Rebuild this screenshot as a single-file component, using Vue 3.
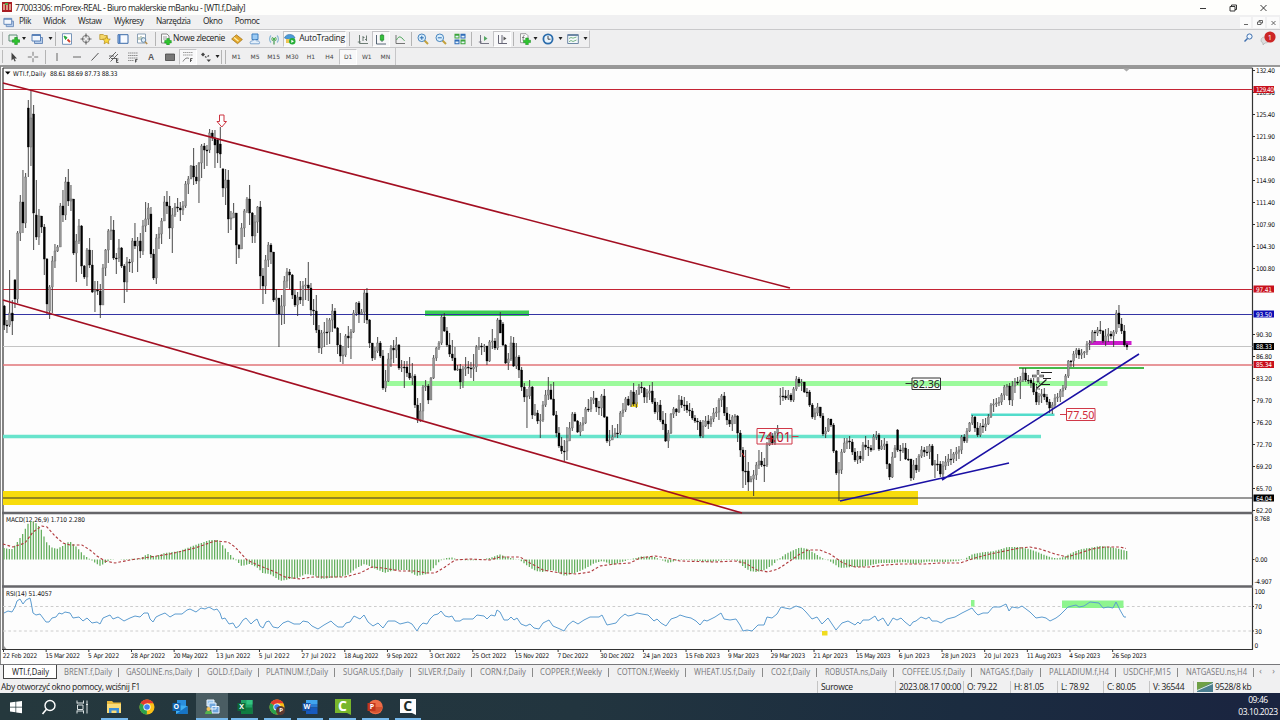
<script setup>
import { ref, computed } from 'vue'

const menu = ['Plik', 'Widok', 'Wstaw', 'Wykresy', 'Narzędzia', 'Okno', 'Pomoc']

// toolbar cells: icon id + cell width
const toolbar = [
    ['newchart', 17], ['arr', 4], ['profiles', 22], ['arr', 5], ['sep', 5], ['market', 18], ['cross', 19], ['fav', 19], ['panel', 18], ['tester', 19],
    ['sep', 9], ['order', 11], ['text', 56, 'Nowe zlecenie'], ['hat', 19], ['vps', 18], ['signal', 19], ['auto', 63, 'AutoTrading'], ['grip', 7],
    ['bars', 19], ['candles', 18, '', true], ['linec', 19], ['sep', 4], ['zin', 19], ['zout', 18], ['tile', 19], ['sep', 5], ['scroll', 19], ['shift', 18, '', true],
    ['sep', 5], ['ind', 17], ['arr', 5], ['clock', 20], ['arr', 5], ['tmpl', 20], ['arr', 5]
]
const drawTools = [
    ['cursor', 17], ['plus', 21], ['sep', 4], ['vline', 20], ['hline', 19], ['trend', 18], ['chan', 19], ['fibo', 19], ['atext', 18],
    ['label', 19], ['fan', 18, '', true], ['arrows', 18], ['arr', 5], ['sep', 3], ['grip', 4]
]
const frames = ['M1', 'M5', 'M15', 'M30', 'H1', 'H4', 'D1', 'W1', 'MN']
const frame = ref('D1')

const tabs = [
    ['WTI.f,Daily', 54, 37], ['BRENT.f,Daily', 62, 48], ['GASOLINE.ns,Daily', 80, 66], ['GOLD.f,Daily', 60, 45], ['PLATINUM.f,Daily', 76, 62],
    ['SUGAR.US.f,Daily', 76, 60], ['SILVER.f,Daily', 61, 47], ['CORN.f,Daily', 61, 46], ['COPPER.f,Weekly', 76, 62], ['COTTON.f,Weekly', 77, 62],
    ['WHEAT.US.f,Daily', 77, 61], ['CO2.f,Daily', 54, 39], ['ROBUSTA.ns,Daily', 77, 62], ['COFFEE.US.f,Daily', 78, 63], ['NATGAS.f,Daily', 69, 53],
    ['PALLADIUM.f,H4', 75, 60], ['USDCHF,M15', 62, 48], ['NATGASEU.ns,H4', 76, 61]
]
const tab = ref('WTI.f,Daily')

const status = [['Surowce', 78], ['2023.08.17 00:00', 68], ['O: 79.22', 47], ['H: 81.05', 47], ['L: 78.92', 46], ['C: 80.05', 46], ['V: 36544', 44]]

const apps = [
    ['win', ''], ['search', ''], ['tasks', ''], ['folder', 'open'], ['chrome', ''], ['outlook', ''], ['mt4', 'open active'], ['excel', 'open'],
    ['chromep', 'open'], ['word', 'open'], ['camt', 'open'], ['ppt', 'open'], ['camw', 'open']
]

const dates = [
    '22 Feb 2022', '15 Mar 2022', '5 Apr 2022', '28 Apr 2022', '20 May 2022', '13 Jun 2022', '5 Jul 2022', '27 Jul 2022', '18 Aug 2022',
    '9 Sep 2022', '3 Oct 2022', '25 Oct 2022', '15 Nov 2022', '7 Dec 2022', '30 Dec 2022', '24 Jan 2023', '15 Feb 2023', '9 Mar 2023',
    '29 Mar 2023', '21 Apr 2023', '15 May 2023', '6 Jun 2023', '28 Jun 2023', '20 Jul 2023', '11 Aug 2023', '4 Sep 2023', '26 Sep 2023'
]
const prices = [
    ['132.40', 70.5], ['128.90', 92.5], ['125.40', 114.5], ['121.90', 136.5], ['118.40', 158.5], ['114.90', 180.5], ['111.40', 202.5], ['107.90', 224.5],
    ['104.30', 246.5], ['100.80', 268.5], ['90.30', 334.5], ['86.80', 356.5], ['83.20', 378.5], ['79.70', 400.5], ['76.20', 422.5], ['72.70', 444.5],
    ['69.20', 466.5], ['65.70', 488.5], ['62.20', 510.5]
]
const tags = [
    ['129.40', 89.5, '#c8101c'], ['97.41', 289, '#c8101c'], ['93.50', 314, '#0c0cb4'], ['88.33', 346.5, '#000'], ['85.34', 364.5, '#c8101c'], ['64.04', 498, '#000']
]

// one bar: close high low [open], open falls back to the previous close
const quotes = `325 305 330 306,325 320 333,313 270 327,321 300 335,299 279 308 280,233 231 303,202 195 241,223 170 233,177 173 228,147 100 177 108,
118 90 166,213 105 250 114,237 180 240 215,216 209 245,227 216 233,259 224 275,304 258 314,287 285 319 311,261 256 313,251 244 268,
247 245 252,206 203 247,215 190 222,182 177 220,201 169 206,199 185 211,253 199 255,241 234 282,226 219 244,266 225 274,
277 265 279,250 248 286,265 238 268,292 250 293,290 281 312,291 281 295,305 284 318,268 264 305,250 249 276,231 229 263,
230 216 240,258 220 260,258 253 274,248 239 262,266 247 268,282 264 303,262 257 292,262 259 272,241 238 273,246 223 249,
241 237 272,251 233 258,226 220 255,219 202 232,208 203 225,254 207 258 214,278 249 280,238 234 284,234 227 249,221 218 244,
202 196 216,206 191 214,228 196 239,215 208 253,207 203 217,208 198 212,210 202 221,206 201 215,184 181 208,179 176 194,
166 165 178,177 148 185,181 165 184,163 162 203,146 144 178,150 143 169,150 145 166,133 129 153,138 130 141,145 130 168,
153 138 163 140,154 127 168 144,188 168 197 169,180 169 205,219 170 233,218 211 230,213 203 217,245 213 264,249 244 258,228 223 249,
211 209 237,199 197 213,213 185 225,236 212 243,222 215 243,207 206 233,276 201 289,286 268 304,260 255 294,245 242 267,
252 243 264,300 252 302,298 289 314,314 307 347,306 295 325,281 276 324,272 268 288,275 269 289,295 274 299,305 290 307,
297 292 316,300 281 304,286 281 306,285 278 300,288 262 301,310 283 316,311 299 325,330 295 333,348 325 353,333 330 354,
332 322 347,332 318 345,320 318 344,311 304 332,328 308 329,345 327 354,356 333 362,355 346 364,336 334 357,338 326 348,
332 329 359,313 310 333,303 302 316,314 301 323,312 309 315,293 290 323,320 288 324,343 319 348,358 343 361,351 347 360,
343 337 353,356 341 358,388 350 390,381 370 392,359 353 382,348 345 367,350 340 363,345 337 358,368 344 370,367 360 372,
367 361 388,373 361 377,378 357 380,376 363 385,405 374 408,420 398 423,411 403 422,387 385 420,386 380 391,400 384 404,
378 377 390,358 355 379,348 347 361,343 341 350,317 315 345,331 313 332,345 327 347,354 333 357,358 340 361,370 347 371,
369 365 371,382 364 389,369 366 388,367 357 376,368 361 374,369 362 378,367 354 381,347 345 372,346 337 350,347 343 355,
346 344 352,361 347 365,342 340 362,341 329 349,348 338 350,320 318 350,333 312 333,345 322 346 324,363 344 364,359 353 370,
343 336 361,366 337 367,357 343 369,370 355 378,387 367 391,397 383 402,396 389 428,387 380 399,415 386 419,413 404 416,
421 410 424,420 414 438,405 401 422,395 390 407,390 377 400,399 384 400,415 382 416,433 411 437,446 427 448,451 437 454,
451 440 461,441 427 460,428 422 441,414 412 431,421 412 422,432 420 433,425 422 436,423 417 431,409 407 424,409 399 412,
400 397 412,398 391 404,407 398 412,408 401 415,396 394 416,417 389 418,441 416 443,440 430 446,437 425 440,433 428 437,
433 424 438,413 411 435,410 403 417,399 397 412,405 396 406,392 390 407,404 383 406,394 390 408,387 384 395,388 382 393,
397 387 403,393 389 403,391 385 400,402 382 404,412 398 414,405 402 420,420 400 422,424 411 430,441 413 442,433 430 448,
414 413 434,409 407 418,412 408 416,400 395 413,405 396 408,405 397 411,410 401 413,411 403 416,418 408 420,421 415 423,
422 418 430,436 420 438,426 420 438,421 416 427,424 415 429,419 416 427,413 408 422,412 407 417,400 398 420,396 394 407,
413 392 416,420 407 425,424 414 427,417 415 431,416 414 424,433 415 442,450 430 457,471 447 488,471 450 485,482 462 491,
479 476 482,475 470 496,465 462 480,461 450 469,465 452 467,465 458 482,445 442 467,436 434 446,443 433 445,433 431 445,
429 425 436,396 388 405 397,396 387 401,398 390 400,395 390 400,400 393 402,389 387 402,379 376 391,383 377 387,382 379 391,
392 382 393,392 388 397,405 390 407,417 403 419,413 408 420,407 403 416,416 407 418,434 413 436,431 427 438,419 418 432,
425 420 427,451 423 453,473 450 475,470 462 501,452 449 474,443 438 453,441 438 449,442 436 449,452 439 455,460 448 462,
456 451 464,459 451 463,445 442 461,447 436 450,448 440 456,450 445 452,437 434 450,435 431 440,449 433 451,446 440 450,
444 438 450,464 441 469,477 463 480,457 452 478,448 445 458,450 429 452 430,451 445 461,448 443 453,459 443 460,459 449 461,
478 461 481,465 460 480,470 458 473,456 454 472,450 446 458,452 447 457,452 446 456,446 444 459,465 444 466,464 460 478,
464 454 471,474 461 477,466 461 477,462 456 470,459 454 466,459 449 465,454 452 463,452 447 461,450 446 459,437 435 454,
441 434 443,431 428 443,423 422 432,417 415 425,428 416 432,435 422 437,426 423 437,427 419 433,424 418 431,417 414 425,
405 403 418,404 399 412,403 398 407,402 397 406,395 393 405,387 385 400,386 384 396,400 383 405,386 381 406,382 378 393,
382 377 385,380 376 399,373 368 382,380 368 382,380 375 384,383 378 388,392 378 395,402 389 405,396 393 405,394 389 403,
397 388 400,402 394 405,408 399 413,405 402 414,398 394 408,397 393 402,391 389 402,388 385 397,376 374 390,361 360 378,
361 360 367,354 351 367,350 348 358,355 348 359,353 349 359,352 351 358,344 341 355,343 340 350,332 330 343,333 330 342,
330 327 336,331 321 334,341 330 343,336 329 346,334 328 342,336 331 339,332 330 347,313 310 334,324 305 328,331 318 334,
345 325 347,347 343 350`

const step = 8 / 3
const candles = computed(() => {
    let prev = 0
    return quotes.split(',').map((row, i) => {
        const [c, h, l, o = prev] = row.trim().split(' ').map(Number)
        prev = c
        return { x: 4.3 + i * step, h, l, y: Math.min(o, c), size: Math.max(1, Math.abs(o - c)), up: c < o }
    })
})

const toPoints = text => text.trim().split(/\s+/).map(p => p.split(',').map(Number))

const macd = toPoints(`4,548 12,549.5 17,543 23,534 28,524 31,521 35,522 41,528 46,541 51,547 57,549 63,546 67,542.5 71,542 77,547 84,555 90,559 95,562.5 100,566 104,564 110,560
125,559 140,558.6 148,554 155,556.5 165,553 180,551 190,547 200,543.5 210,540 218,540 222,544 230,554 237,561 242,566 250,564 257,567 263,573 270,574 281,581 290,579 298,578
306,574 313,575 322,579 330,578 340,577 348,575 357,568 365,564 374,568 385,573 395,570 407,570 417,576 427,574 433,569 440,561 446,558 452,557.5 460,560 475,560.4 490,558
500,554.5 507,557 520,560 528,566 536,571 543,572 550,570 556,571 565,576 575,573 585,569 595,563 603,561 613,565 622,562 632,559 642,556.5 655,557 662,560 669,563 678,560
690,560 710,562 725,560 737,560 743,566 750,571 757,572 765,570 773,565 778,560 786,554 794,550 800,547.5 808,549 816,554 822,558 828,560 833,563 840,568 853,567 862,567
872,565 880,563 893,563 905,562 915,564 928,561.5 945,562 958,561 965,559 973,554 985,552 995,551 1008,547 1020,547 1030,549 1040,553 1050,557 1057,558.5 1064,557 1072,553
1080,549.5 1092,547.5 1100,546 1110,547 1120,549 1130,552`)

const histogram = computed(() => candles.value.map(({ x }) => {
    const k = Math.max(1, macd.findIndex(p => p[0] > x))
    const [a, b] = [macd[k - 1], macd[k]]
    const y = a[1] + (b[1] - a[1]) * (x - a[0]) / (b[0] - a[0])
    return { x, y }
}))

const signalLine = `3,544 13,547 25,543 33,532 42,526 47,527 55,536 63,543 70,545 82,545 90,550 97,556 105,561 115,563 130,560 150,557 170,554 195,548 215,541 228,542 235,547
247,560 260,566 275,572 285,577 300,579 313,577 345,577 360,573 372,567 383,568 400,571 415,571 427,573 435,573 445,567 455,560 470,559 490,560 500,557 520,557 530,563
543,570 560,573 577,574 590,572 600,566 615,564 630,563 640,558 655,556 667,558 680,561 715,562 735,561 745,563 757,570 768,572 778,569 790,561 800,554 808,550 820,550
830,554 843,563 855,567 870,567 885,565 900,564 925,564 940,563 960,563 975,558 990,554 1005,551 1020,548 1030,547 1040,549 1055,554 1067,557 1080,553 1092,549 1105,547 1120,547 1126,548.5`

const rsiLine = `4,613 8,611 12,612 15,607 17,601 20,599 23,604 26,600 30,598 31,602 33,613 36,615 40,614 43,618 46,622 49,622 52,618 56,617 59,613 62,614 65,612 70,613 73,618
79,617 83,621 87,618 92,623 97,622 100,624 103,618 110,615 113,619 118,617 124,621 130,618 135,616 140,617 144,613 148,613 150,619 153,622 156,617 160,615 165,613 170,617
175,614 182,614 187,610 190,609 196,612 201,608 205,609 209,607 214,610 217,609 220,613 222,619 225,618 229,624 233,623 236,628 239,626 243,620 246,618 251,624 254,621
257,619 260,626 263,628 266,622 269,621 273,627 278,628 283,623 288,621 294,624 300,624 303,621 308,622 312,626 318,629 324,625 331,621 334,624 338,627 343,627 346,623
350,622 354,616 360,619 364,615 368,622 373,626 378,623 383,628 388,621 395,621 400,624 408,622 412,624 417,631 420,626 423,623 427,624 430,619 434,615 438,614 441,611
445,616 449,617 452,616 455,621 460,621 463,619 473,619 477,615 484,616 487,619 491,615 495,616 497,610 500,612 504,620 508,620 511,617 514,620 517,618 521,624 526,626
530,624 534,628 539,629 543,623 549,620 553,626 560,629 564,631 568,625 573,621 578,624 584,620 590,617 599,617 602,615 607,625 616,623 620,618 625,614 628,616 633,615
637,613 642,614 648,615 654,621 657,619 661,623 666,626 671,619 677,617 680,615 686,617 691,618 696,621 700,625 704,620 707,621 715,617 721,613 724,619 730,620 736,619
740,625 743,631 747,630 752,631 758,625 764,625 767,617 772,618 777,614 781,607 785,608 790,609 796,606 802,608 806,612 812,619 817,617 822,624 828,618 832,624 836,630
842,623 848,621 855,625 858,622 860,624 863,620 869,620 875,616 878,621 883,618 888,626 893,618 897,620 901,618 905,622 910,626 913,622 916,621 921,617 926,619 929,617
932,621 937,621 941,623 947,619 955,617 962,613 966,611 972,608 975,612 978,615 983,613 988,613 993,607 1000,607 1006,604 1009,611 1012,607 1018,608 1022,606 1026,609
1030,612 1036,618 1042,617 1046,618 1050,621 1056,618 1060,615 1064,611 1068,607 1076,605 1079,607 1084,606 1090,602 1099,603 1103,608 1108,607 1113,608 1116,602 1120,610 1124,617 1126,617`
</script>

<template>
    <div class="screen">
        <svg class="defs">
            <symbol id="i-newchart" viewBox="0 0 12 12"><path d="M1 2h8v6H1z" fill="#eef4ee" stroke="#5b8a74" /><path d="M6.7 4.5h2.6v2.3h2.3v2.5H9.300v2.300H6.700V9.300H4.400V6.800h2.300z" fill="#2fc52f" stroke="#138a1b" stroke-width=".6" /></symbol>
            <symbol id="i-profiles" viewBox="0 0 12 12"><path d="M3.500 4.500h8v6h-8z" fill="#b7cdea" stroke="#6d8dbb" /><path d="M1 1.500h8.500v6.500H1z" fill="#f2f6fc" stroke="#5b82b8" /><path d="M1 2.500h8.500" stroke="#5b82b8" /></symbol>
            <symbol id="i-market" viewBox="0 0 12 12"><path d="M1.500.7h9v10.600h-9z" fill="#fff" stroke="#7795b9" /><path d="M3 3l3 1.500L4.500 6.500z" fill="#27a73a" stroke="#27a73a" /><path d="M6.500 6.500l2.500 2.500" stroke="#d3402c" stroke-width="2" /></symbol>
            <symbol id="i-cross" viewBox="0 0 12 12"><circle cx="6" cy="6" r="3.600" fill="none" stroke="#777" /><path d="M6 .5v4M6 7.500v4M.5 6h4M7.500 6h4" stroke="#666" stroke-width="1.200" /></symbol>
            <symbol id="i-fav" viewBox="0 0 12 12"><path d="M.8 1.500h3.500l1 1h3v4H.8z" fill="#f5d768" stroke="#b99732" stroke-width=".8" /><path d="M7.500 3.500l1.100 2.400 2.700.3-2 1.800.6 2.800-2.400-1.400-2.400 1.400.6-2.800-2-1.800 2.700-.3z" fill="#fbd83c" stroke="#b08a20" stroke-width=".7" /></symbol>
            <symbol id="i-panel" viewBox="0 0 12 12"><path d="M1 1.700h10v8.600H1z" fill="#f7faff" stroke="#3a6aa8" /><path d="M1.500 2h2v8h-2z" fill="#4c7fc4" /></symbol>
            <symbol id="i-tester" viewBox="0 0 12 12"><path d="M1.500 1h8v9h-8z" fill="#fff" stroke="#8aa0b5" /><path d="M3 7V4m2 3V3m2 4V4" stroke="#6f8d6e" stroke-width=".8" /><circle cx="7.500" cy="7" r="2.300" fill="#dcebf8cc" stroke="#6589a9" /><path d="M9.200 8.700l2 2.300" stroke="#b68f4d" stroke-width="1.500" /></symbol>
            <symbol id="i-order" viewBox="0 0 12 12"><path d="M1.500 1h5.500l2 2v7h-7.500z" fill="#fafafa" stroke="#888" /><path d="M3 4h4M3 6h3" stroke="#777" stroke-width=".7" /><path d="M6.700 5.500h2.600v2h2v2.500h-2v2H6.700v-2h-2V7.500h2z" fill="#2fc52f" stroke="#138a1b" stroke-width=".5" /></symbol>
            <symbol id="i-hat" viewBox="0 0 12 12"><path d="M.6 6l4.800-4.200L11.400 6.500 6.500 10.700z" fill="#e3a72c" stroke="#9b6d13" stroke-width=".7" /><path d="M3 4.500l4.500 3.700" stroke="#fff0ae" stroke-width="1.300" /></symbol>
            <symbol id="i-vps" viewBox="0 0 12 12"><path d="M3 1h6v5.500H3z" fill="#9ccbf4" stroke="#3d7fc0" /><path d="M1.500 10.800c-1.200-2 .7-3 1.800-2.700.6-1.700 3.600-1.900 4.400-.2 2.200-.6 3.600 1.300 2.500 2.900z" fill="#e4f0fb" stroke="#6393c8" stroke-width=".8" /></symbol>
            <symbol id="i-signal" viewBox="0 0 12 12"><path d="M3 2.500a5 5 0 000 7M9 2.500a5 5 0 010 7" fill="none" stroke="#8db8d6" stroke-width="1.200" /><path d="M4.600 4a3 3 0 000 4M7.400 4a3 3 0 010 4" fill="none" stroke="#5fae6c" /><circle cx="6" cy="6" r="1.300" fill="#4caf50" /><path d="M6 7v4.500" stroke="#4c9f58" stroke-width="1.300" /></symbol>
            <symbol id="i-auto" viewBox="0 0 12 12"><path d="M.5 5C1.500.5 9.500 0 11 5l-5 2z" fill="#4d9bd8" stroke="#2d6fa5" stroke-width=".6" /><path d="M2 6h7v4H2z" fill="#edc557" /><circle cx="8.300" cy="8.300" r="3.200" fill="#26ae38" /><path d="M7.300 6.700v3.200l2.700-1.600z" fill="#fff" /></symbol>
            <symbol id="i-bars" viewBox="0 0 12 12"><path d="M2.500 2v8.500H11M.8 9h3M6 8V3M6 4.500h1.500M9.500 8V2.500M8 6.500h1.500" fill="none" stroke="#5f6f66" stroke-width=".9" /></symbol>
            <symbol id="i-candles" viewBox="0 0 12 12"><path d="M1.500 2v9H11M7 .8V9" fill="none" stroke="#456" stroke-width=".9" /><path d="M5.300 2.200h3.400v5H5.300z" fill="#35c13d" stroke="#138a1b" stroke-width=".7" /></symbol>
            <symbol id="i-linec" viewBox="0 0 12 12"><path d="M2 2v8.500h9" fill="none" stroke="#666" stroke-width=".9" /><path d="M2.500 7c2.500-4.500 4-4 8 .8" fill="none" stroke="#4aa557" /></symbol>
            <symbol id="i-zin" viewBox="0 0 12 12"><path d="M7 7l4 4" stroke="#c3a13c" stroke-width="2" /><circle cx="4.800" cy="4.800" r="3.800" fill="#d9eefc" stroke="#4a86be" /><path d="M2.800 4.800h4M4.800 2.800v4" stroke="#2f70b3" /></symbol>
            <symbol id="i-zout" viewBox="0 0 12 12"><path d="M7 7l4 4" stroke="#c3a13c" stroke-width="2" /><circle cx="4.800" cy="4.800" r="3.800" fill="#d9eefc" stroke="#4a86be" /><path d="M2.800 4.800h4" stroke="#2f70b3" /></symbol>
            <symbol id="i-tile" viewBox="0 0 12 12"><path d="M.5.800h5v4.700h-5zM6.500 6.500h5v4.700h-5z" fill="#3ca53b" /><path d="M6.500.800h5v4.700h-5zM.5 6.500h5v4.700h-5z" fill="#2f6cb8" /><path d="M1.500 2.800h3v1.700h-3zM7.500 2.800h3v1.700h-3zM1.500 8.500h3v1.700h-3zM7.500 8.500h3v1.700h-3z" fill="#e8f2fb" /></symbol>
            <symbol id="i-scroll" viewBox="0 0 12 12"><path d="M2.500 2v8.500H11M.8 9h3" fill="none" stroke="#667" stroke-width=".9" /><path d="M6 3v5l3.500-2.500z" fill="#55a763" /></symbol>
            <symbol id="i-shift" viewBox="0 0 12 12"><path d="M2.500 2v8.500H11M6 2v8" fill="none" stroke="#556" stroke-width=".9" /><path d="M7.500 3.500v4L10.500 5.500z" fill="#555" /></symbol>
            <symbol id="i-ind" viewBox="0 0 12 12"><path d="M1.500.7h5.500l2 2v7h-7.500z" fill="#fafafa" stroke="#888" stroke-width=".8" /><path d="M5.500 2.500c-1.500-.3-1.200 1.500-1.500 5M3 4.500h2.500" fill="none" stroke="#555" stroke-width=".7" /><path d="M6.700 5h2.600v2.200h2.200v2.400H9.300v2.200H6.700V9.600H4.500V7.200h2.200z" fill="#2fc52f" stroke="#138a1b" stroke-width=".5" /></symbol>
            <symbol id="i-clock" viewBox="0 0 12 12"><circle cx="6" cy="6" r="4.600" fill="#e9f4fd" stroke="#2b6cab" stroke-width="1.800" /><path d="M6 3v3.200h2.500" fill="none" stroke="#333" stroke-width=".9" /></symbol>
            <symbol id="i-tmpl" viewBox="0 0 12 12"><path d="M.7 1.500h10.600v9H.7z" fill="#f5f9fc" stroke="#6d87a5" /><path d="M.7 2.500h10.600" stroke="#6d87a5" /><path d="M2 5.500l2-1 2 .7 3.500-1.200M2 8.700l2-1.200 2 1 3.500-1.500" fill="none" stroke="#58a366" stroke-width=".8" /></symbol>
            <symbol id="i-cursor" viewBox="0 0 12 12"><path d="M3.500 1.500v8l1.800-1.700 1.300 2.800 1.200-.6-1.300-2.600h2.500z" fill="#444" /></symbol>
            <symbol id="i-plus" viewBox="0 0 12 12"><path d="M6 .8v4M6 7.200v4M.8 6h4M7.200 6h4" stroke="#777" /></symbol>
            <symbol id="i-vline" viewBox="0 0 12 12"><path d="M6 2v8" stroke="#666" /></symbol>
            <symbol id="i-hline" viewBox="0 0 12 12"><path d="M2 6h8" stroke="#666" /></symbol>
            <symbol id="i-trend" viewBox="0 0 12 12"><path d="M2.500 9.500l7-7.500" stroke="#555" /></symbol>
            <symbol id="i-chan" viewBox="0 0 12 12"><path d="M1 8l7-7M2.500 10.500L10 3M1 5h5M3 7.500h6" stroke="#555" stroke-width=".9" /><path d="M8.500 8v3.500h2M8.500 9.700h1.600M8.500 8h2" fill="none" stroke="#333" stroke-width=".8" /></symbol>
            <symbol id="i-fibo" viewBox="0 0 12 12"><path d="M1 2h10M1 4.500h10M1 7h10M1 9.500h6" stroke="#777" stroke-width=".8" stroke-dasharray="1.500 .4" /><path d="M8.500 11.500V8.500h2M8.500 10h1.500" fill="none" stroke="#333" stroke-width=".8" /></symbol>
            <symbol id="i-label" viewBox="0 0 12 12"><path d="M1.500 3h9v6.500h-9z" fill="#777" stroke="#444" stroke-width=".8" /></symbol>
            <symbol id="i-fan" viewBox="0 0 12 12"><path d="M1 1.500h10M1 4h10" stroke="#888" stroke-width=".8" stroke-dasharray="1.500 .4" /><path d="M1 10.500c2-3.500 4-4 6-3" fill="none" stroke="#555" stroke-width=".8" /><path d="M8.500 11V7.500h2M8.500 9.300h1.500" fill="none" stroke="#333" stroke-width=".8" /></symbol>
            <symbol id="i-arrows" viewBox="0 0 12 12"><path d="M1 3.500L3 1.500 5 3.500 3 5.500zM6.500 8.500h4.500L8.800 11z" fill="#444" /><path d="M5 5.500l1.500 1M7.500 5.500l1.500-1" stroke="#444" stroke-width="1.300" /></symbol>

            <symbol id="i-win" viewBox="0 0 16 16"><path d="M2 3.600l5.500-.8v4.900H2zM8.200 2.700L14 1.900v5.800H8.200zM2 8.400h5.500v4.900L2 12.500zM8.200 8.400H14v5.800l-5.800-.8z" fill="#fff" /></symbol>
            <symbol id="i-search" viewBox="0 0 16 16"><circle cx="9" cy="6.500" r="5" fill="none" stroke="#fff" stroke-width="1.400" /><path d="M5.500 10.200L1.500 15" stroke="#fff" stroke-width="1.600" /></symbol>
            <symbol id="i-tasks" viewBox="0 0 16 16"><path d="M3 1.500v3M9.500 1.500v3M3 4h6.500M3.500 6h5.500v4.500H3.500zM3 14.500v-3M9.500 14.500v-3M3 12h6.500M13 1.500v13M12 5.500h2" fill="none" stroke="#dce3e4" /></symbol>
            <symbol id="i-folder" viewBox="0 0 16 16"><path d="M1 2h5l1.500 1.500H15V14H1z" fill="#e9b93d" /><path d="M1 5h14v9H1z" fill="#fbdc78" /><path d="M3 9h10v5h-2.500v-2.500h-5V14H3z" fill="#3d8fd9" /></symbol>
            <symbol id="i-chrome" viewBox="0 0 16 16"><circle cx="8" cy="8" r="7.500" fill="#fbc116" /><path d="M8 8L1.500 4.300A7.500 7.500 0 0114.500 4.300H8z" fill="#e33b2e" /><path d="M1.500 4.300L8 8l-.2 7.500A7.500 7.500 0 011.500 4.300z" fill="#2ba24c" /><circle cx="8" cy="8" r="3.600" fill="#fff" /><circle cx="8" cy="8" r="2.800" fill="#3f80ec" /></symbol>
            <symbol id="i-chromep" viewBox="0 0 16 16"><use href="#i-chrome" /><circle cx="11.500" cy="11.500" r="4.500" fill="#5b3a31" /></symbol>
            <symbol id="i-outlook" viewBox="0 0 16 16"><path d="M5 1h9v7H5z" fill="#2a8fdd" /><path d="M4 6l11.500 1v8H4z" fill="#41b0f0" /><path d="M4 15l11.500-8v8z" fill="#1674c5" /><path d="M.5 4h8v8h-8z" fill="#0f64b2" /></symbol>
            <symbol id="i-mt4" viewBox="0 0 16 16"><path d="M3 1h7v6H3z" fill="#9cc7ee" stroke="#eef6ff" /><path d="M5 4h7v6H5zM8 7.500h7v6.500H8z" fill="#6fa5dc" stroke="#e8f2ff" /><path d="M1 15c0-5 7-5 7 0z" fill="#54b24e" /><circle cx="4.500" cy="10" r="2" fill="#f3c15c" /></symbol>
            <symbol id="i-excel" viewBox="0 0 16 16"><path d="M4 1h11.500v14H4z" fill="#21a366" /><path d="M9.500 1h6v4.500h-6z" fill="#33c481" /><path d="M4 8.500h11.500V15H4z" fill="#107c41" /><path d="M.5 4h8v8h-8z" fill="#0d6a37" /></symbol>
            <symbol id="i-word" viewBox="0 0 16 16"><path d="M4 1h11.500v4H4z" fill="#41a5ee" /><path d="M4 5h11.500v3.500H4z" fill="#2b7cd3" /><path d="M4 8.500h11.500V15H4z" fill="#185abd" /><path d="M.5 4h8v8h-8z" fill="#1650a5" /></symbol>
            <symbol id="i-ppt" viewBox="0 0 16 16"><circle cx="8.500" cy="8" r="7.300" fill="#ed6c47" /><path d="M8.500 8h7.300a7.300 7.300 0 01-14.400 0z" fill="#d35230" /><path d="M.5 4h8v8h-8z" fill="#c1351c" /></symbol>
            <symbol id="i-camt" viewBox="0 0 16 16"><path d="M0 0h16v16l-4-2H0z" fill="#78b62b" /></symbol>
            <symbol id="i-camw" viewBox="0 0 16 16"><path d="M0 0h16v16l-4-2H0z" fill="#fdfdfd" /></symbol>
        </svg>

        <header class="titlebar">
            <svg class="logo" viewBox="0 0 10 10"><path d="M0 0h10v10H0z" fill="#a91e24" /><path d="M2 8V2M5 8V3M8 8V2" stroke="#f5d9b8" stroke-width="1.300" /><path d="M3 2h3" stroke="#53a948" stroke-width="2" /></svg>
            <span class="title">77003306: mForex-REAL - Biuro maklerskie mBanku - [WTI.f,Daily]</span>
            <svg class="winbtns" viewBox="0 0 80 14" fill="none" stroke="#222" stroke-width=".9">
                <path d="M0 7.500h6M30 5.500h5v4.500h-5zM31.500 5.500V4h5v4.500h-1.500M60.500 4l6 6M66.500 4l-6 6" />
            </svg>
        </header>

        <nav class="menubar">
            <svg class="menu-icon" viewBox="0 0 12 12"><use href="#i-profiles" /></svg>
            <a v-for="m in menu" :key="m" href="#" @click.prevent>{{ m }}</a>
            <svg class="mdi" viewBox="0 0 40 12" fill="none" stroke="#555" stroke-width=".9">
                <path d="M0 1h11v11H0zM13 1h12v11H13zM27 1h12v11H27z" fill="#fbfbfb" stroke="none" />
                <path d="M4 8.500h4M17.500 6h3.500v2.500h-3.500zM19 6V4.500h3.500V7h-1.500M31.500 5l4 4M35.500 5l-4 4" />
            </svg>
        </nav>

        <section class="tools">
            <div class="bar first">
                <i class="grip"></i>
                <template v-for="(t, i) in toolbar" :key="i">
                    <i v-if="t[0] === 'arr'" class="arr" :style="{ width: t[1] + 'px' }"></i>
                    <i v-else-if="t[0] === 'sep' || t[0] === 'grip'" class="sep" :style="{ width: t[1] + 'px' }"></i>
                    <span v-else class="cell" :class="{ pressed: t[3], boxed: t[0] === 'auto' }" :style="{ width: t[1] + 'px' }">
                        <svg v-if="t[0] !== 'text'" class="ic"><use :href="'#i-' + t[0]" /></svg>
                        <b v-if="t[2]">{{ t[2] }}</b>
                    </span>
                </template>
            </div>
            <svg class="help" viewBox="0 0 36 18">
                <circle cx="5.500" cy="6.500" r="2.600" fill="#eef6ff" stroke="#3e6fae" /><path d="M3.500 8.500L.5 11.500" stroke="#3e6fae" stroke-width="1.500" />
                <path d="M17 10c0-4 8-4 8 0 0 2-2 3-4 3l-2 2v-2c-1-.3-2-1-2-3z" fill="#ddd" stroke="#aaa" stroke-width=".6" />
                <circle cx="26" cy="7" r="5.600" fill="#cc2626" /><text x="26" y="9.700" text-anchor="middle" font-size="7.500" fill="#fff">1</text>
            </svg>
            <div class="bar second">
                <i class="grip"></i>
                <template v-for="(t, i) in drawTools" :key="i">
                    <i v-if="t[0] === 'arr'" class="arr" :style="{ width: t[1] + 'px' }"></i>
                    <i v-else-if="t[0] === 'sep' || t[0] === 'grip'" class="sep" :style="{ width: t[1] + 'px' }"></i>
                    <span v-else class="cell" :class="{ pressed: t[3] }" :style="{ width: t[1] + 'px' }">
                        <em v-if="t[0] === 'atext'">A</em>
                        <svg v-else class="ic"><use :href="'#i-' + t[0]" /></svg>
                    </span>
                </template>
                <button v-for="f in frames" :key="f" class="frame" :class="{ pressed: f === frame }" @click="frame = f">{{ f }}</button>
            </div>
        </section>

        <svg class="chart" viewBox="0 65 1280 599">
            <path d="M0 65h1280v599H0z" fill="#fdfdfd" />
            <path d="M0 66h1280" stroke="#777" stroke-width="1.400" />
            <path d="M0 66v598" stroke="#888" stroke-width="2" />
            <path d="M3 68h1249.500M3 68v581.500M1252.500 68v581.500M2 649.500h1251" fill="none" stroke="#333" stroke-width="1.200" />
            <path d="M2 513h1251M2 586.500h1251" stroke="#66666a" stroke-width="2.400" />
            <path d="M1123 68.500h7l-3.500 3z" fill="#aaa" />

            <!-- zones -->
            <path d="M3 491h915v14H3z" fill="#f8dc0c" />
            <path d="M3 434.700h1038v3.600H3z" fill="#68e4cc" />
            <path d="M386 381h721.500v5H386z" fill="#9cfa9c" />
            <path d="M425 310.500h104v5.500H425z" fill="#3ccc54" />
            <path d="M971 413.400h83.500v2.600H971z" fill="#52dccb" />
            <path d="M1019 367h125v2h-125z" fill="#46b94a" />
            <path d="M1089 341h42.500v4H1089z" fill="#cc1ccc" />
            <path d="M631 402h7v5h-7z" fill="#f2d820" />

            <!-- levels -->
            <path d="M3 89.500h1249.500" stroke="#c42434" />
            <path d="M3 289.500h1249.500" stroke="#c42434" />
            <path d="M3 314.500h1249.500" stroke="#3434a4" />
            <path d="M3 346.500h1249.500" stroke="#c4c4c4" />
            <path d="M3 365h1249.500" stroke="#e07478" stroke-width="1.400" />
            <path d="M3 498h1249.500" stroke="#333" />

            <g v-for="c in candles" :key="c.x">
                <path :d="`M${c.x} ${c.h}V${c.l}`" stroke="#333" stroke-width=".9" />
                <rect :x="c.x - 1" :y="c.y" :width="2" :height="c.size" :fill="c.up ? '#969696' : '#000'" :stroke="c.up ? '#555' : '#000'" stroke-width=".3" />
            </g>

            <g fill="none" stroke-width="1.600">
                <path d="M3 83l787 205M3 300l739 213" stroke="#a30f22" />
                <path d="M840 501l169-38M942 480l197-126" stroke="#1a10a4" />
            </g>
            <path d="M219.500 115h4.500v6.500h2.500l-4.700 5.500-4.800-5.500h2.500z" fill="#fff" stroke="#cc3440" />
            <path d="M742 453l2.500 4" stroke="#c22" />

            <g class="note" fill="none">
                <path d="M905.500 383.500h6.500M912 378h28.500v11.500H912z" stroke="#333" />
                <text x="912.500" y="387.800" font-size="11" textLength="27.500" lengthAdjust="spacingAndGlyphs" fill="#222">82.36</text>
                <path d="M1060 414.500h6M1066.500 408.500h28.500v12h-28.500z" stroke="#d03848" />
                <text x="1067" y="418.500" font-size="11.500" textLength="27.500" lengthAdjust="spacingAndGlyphs" fill="#d02838">77.50</text>
                <path d="M792 436.500h6.500M757 428.500h35v15.500h-35z" stroke="#d03848" />
                <text x="758.500" y="441.500" font-size="14" textLength="32.500" lengthAdjust="spacingAndGlyphs" fill="#c01830">74.01</text>
            </g>

            <!-- fibonacci pointer -->
            <path d="M1041 372.500h11M1043 378.500h8M1041 384.500h9M1036.500 388.500l10-9" stroke="#222" stroke-width="1.200" />
            <path d="M1037 381.500l4.500 3M1036.500 384v5h4" fill="none" stroke="#222" stroke-dasharray="1.500 .8" />
            <path d="M1032 376h4.500M1039.500 376h4.500M1038 370v4.500M1038 377.500v4.500" stroke="#222" stroke-width="2.400" />
            <path d="M1032.500 376h3.500M1040 376h3.500M1038 370.500v3.500M1038 378v3.500" stroke="#fff" stroke-width=".9" />

            <g class="mono">
                <path d="M5 71.500h5.500l-2.700 3z" fill="#000" />
                <text x="13" y="75.600" textLength="33">WTI.f,Daily</text>
                <text x="50" y="75.600" textLength="67.500">88.61 88.69 87.73 88.33</text>
                <text x="6" y="522.300" textLength="79">MACD(12,26,9) 1.710 2.280</text>
                <text x="6" y="595.500" textLength="46">RSI(14) 51.4057</text>
            </g>

            <path v-for="h in histogram" :key="h.x" :d="`M${h.x - .3} 559.500V${h.y}`" stroke="#5cab55" stroke-width="1.200" />
            <polyline :points="signalLine" fill="none" stroke="#b0383c" stroke-width="1.100" stroke-dasharray="2.700 2" />

            <path d="M3 606.500h1249.500M3 631h1249.500" stroke="#ccc" stroke-dasharray="2.700 2.600" />
            <path d="M971 600h3.500v6.500H971zM1062 600.500h61.500v7.500H1062z" fill="#8ef58e" />
            <path d="M822 631h5.500v4.500H822z" fill="#f0dc20" />
            <polyline :points="rsiLine" fill="none" stroke="#5c9cd0" />
            <path d="M4 646l2.500 3H4z" fill="#999" />

            <g class="mono">
                <template v-for="p in prices" :key="p[0]">
                    <path :d="`M1252.500 ${p[1]}h2.500`" stroke="#333" />
                    <text x="1256" :y="p[1] + 2.500" :textLength="p[0].length > 5 ? 19 : 16">{{ p[0] }}</text>
                </template>
                <template v-for="t in tags" :key="t[0]">
                    <rect x="1253.500" :y="t[1] - 3.500" width="20.500" height="7" :fill="t[2]" />
                    <text x="1256" :y="t[1] + 2.500" :textLength="t[0].length > 5 ? 18 : 16" class="tag">{{ t[0] }}</text>
                </template>
                <path d="M1252.500 559.500h2M1252.500 606.500h1.500M1252.500 631h1.500" stroke="#333" />
                <text x="1254.500" y="521" textLength="15.500">8.768</text>
                <text x="1255" y="562" textLength="12.500">0.00</text>
                <text x="1254.500" y="583.500" textLength="17.500">-4.907</text>
                <text x="1254.500" y="594" textLength="10.500">100</text>
                <text x="1254.500" y="609">70</text>
                <text x="1254.500" y="633.500">30</text>
                <text x="1254.500" y="647.500">0</text>
                <template v-for="(d, i) in dates" :key="d">
                    <path :d="`M${3.500 + i * 42.660} 649.500v2.500`" stroke="#333" />
                    <text :x="2.800 + i * 42.660" y="658" :textLength="d.length > 10 ? 34.500 : 31">{{ d }}</text>
                </template>
            </g>
        </svg>

        <div class="tabs">
            <a v-for="t in tabs" :key="t[0]" href="#" class="tab" :class="{ current: t[0] === tab }" :style="{ width: t[1] + 'px' }" @click.prevent="tab = t[0]">
                <svg :width="t[2] + 4" height="14"><text x="2" y="10" :textLength="t[2]" lengthAdjust="spacingAndGlyphs">{{ t[0] }}</text></svg>
            </a>
            <span class="pager"><i>‹</i><i>›</i></span>
        </div>

        <footer class="status">
            <span class="hint">Aby otworzyć okno pomocy, wciśnij F1</span>
            <span v-for="s in status" :key="s[0]" class="slot" :style="{ width: s[1] + 'px' }">{{ s[0] }}</span>
            <span class="slot net">
                <svg viewBox="0 0 16 10"><path d="M0 0h16v10H0z" fill="#4b7f91" /><path d="M0 0h16L0 8z" fill="#6fa046" /><path d="M0 8.500L16 1.500" stroke="#e3efdc" /></svg>
                9528/8 kb
            </span>
        </footer>

        <div class="taskbar">
            <span v-for="a in apps" :key="a[0]" class="app" :class="a[1]">
                <svg class="appic"><use :href="'#i-' + a[0]" /></svg>
                <b v-if="a[0] === 'outlook'" class="letter">O</b>
                <b v-if="a[0] === 'excel'" class="letter">X</b>
                <b v-if="a[0] === 'word'" class="letter">W</b>
                <b v-if="a[0] === 'ppt'" class="letter">P</b>
                <b v-if="a[0] === 'chromep'" class="letter badge">P</b>
                <b v-if="a[0] === 'camt'" class="letter big">C</b>
                <b v-if="a[0] === 'camw'" class="letter big dark">C</b>
            </span>
            <div class="clock"><span>09:46</span><span>03.10.2023</span></div>
        </div>
    </div>
</template>

<style>
body{
    margin: 0;
    overflow: hidden;
}
</style>

<style scoped>
.screen{
    width: 1280px;
    height: 720px;
    display: flex;
    flex-direction: column;
    overflow: hidden;
    background: #f0f0f0;
    font-family: "Open Sans", "Noto Sans", sans-serif;
    font-size: 8.500px;
    color: #222;
}
.screen *{
    box-sizing: border-box;
}
.defs{
    display: none;
}
a{
    color: inherit;
    text-decoration: none;
}

.titlebar{
    display: flex;
    align-items: center;
    height: 15px;
    background: #fefefc;
}
.logo{
    width: 10px;
    height: 10px;
    margin: 0 3px 1px 2px;
}
.title{
    flex: 1;
    letter-spacing: -.46px;
    line-height: 13px;
    padding-bottom: 1px;
    white-space: nowrap;
}
.winbtns{
    width: 80px;
    height: 14px;
}

.menubar{
    display: flex;
    align-items: center;
    height: 14px;
    background: #f0f0f1;
}
.menu-icon{
    width: 11px;
    height: 11px;
    margin: 0 5px 0 3px;
}
.menubar a{
    margin-right: 12.500px;
    padding-bottom: 2px;
    font-size: 8.300px;
    line-height: 12px;
    letter-spacing: -.42px;
}
.mdi{
    width: 40px;
    height: 12px;
    margin-left: auto;
}

.tools{
    position: relative;
    height: 36px;
    border-top: 1px solid #c9c9cb;
    background: #efeff0;
}
.bar{
    display: flex;
    align-items: center;
    height: 18px;
    border: 1px solid #c6c6c8;
    border-left: none;
}
.bar > *{
    flex: none;
}
.first{
    width: 590px;
    padding-bottom: 1px;
    border-top-color: #fff;
}
.second{
    width: 396px;
    height: 17px;
    border-top: none;
    border-bottom: none;
}
.grip{
    width: 5px;
    height: 13px;
    background: linear-gradient(90deg, transparent 2px, #bbb 2px, #bbb 3px, transparent 3px);
}
.sep{
    height: 14px;
    background: linear-gradient(#b4b4b4, #b4b4b4) center / 1px 100% no-repeat;
}
.arr{
    height: 3px;
    background: #222;
    clip-path: polygon(calc(50% - 2px) 0, calc(50% + 2px) 0, 50% 100%);
}
.cell{
    display: flex;
    align-items: center;
    justify-content: center;
    height: 16px;
}
.cell b{
    padding-bottom: 2px;
    font-weight: 400;
    line-height: 12px;
    letter-spacing: -.38px;
    white-space: nowrap;
}
.cell em{
    font: bold 8.500px "Liberation Sans", sans-serif;
    color: #555;
}
.ic{
    width: 12px;
    height: 12px;
    flex: none;
}
.pressed, .boxed{
    background: #f8f8f9;
    border: 1px solid #c4c4c6;
    border-right-color: #fff;
    border-bottom-color: #fff;
}
.boxed b{
    margin-left: 3px;
    letter-spacing: -.3px;
}
.help{
    position: absolute;
    right: 0;
    top: 0;
    width: 36px;
    height: 18px;
}
.frame{
    width: 18.650px;
    height: 16px;
    padding: 0;
    border: 1px solid transparent;
    background: none;
    font: 6px "DejaVu Sans", sans-serif;
    color: #444;
}
.frame.pressed{
    background: #f8f8f9;
    border-color: #c4c4c6 #fff #fff #c4c4c6;
}

.chart{
    display: block;
    width: 1280px;
    height: 599px;
    flex: none;
}
.mono text{
    font-family: "DejaVu Sans Condensed", "DejaVu Sans", sans-serif;
    font-size: 6.500px;
    fill: #111;
}
.mono text.tag{
    fill: #fff;
}
.note text{
    font-family: "Noto Sans", sans-serif;
}

.tabs{
    display: flex;
    height: 16px;
    padding-left: 3px;
    border-top: 1px solid #77777a;
    background: #f0f0f1;
}
.tab{
    display: flex;
    flex: none;
    align-items: center;
    justify-content: center;
    height: 14px;
    background: linear-gradient(#8a8a8a, #8a8a8a) right center / 1px 9px no-repeat;
}
.tab svg{
    flex: none;
    overflow: visible;
}
.tab text{
    font-size: 8.500px;
    fill: #77777a;
}
.tab.current{
    background: #fff;
    box-shadow: inset 1px 0 #444, inset -1px -1px #444;
}
.tab.current text{
    fill: #111;
}
.pager{
    flex: 1;
    display: flex;
    justify-content: space-around;
    line-height: 12px;
    color: #777;
}
.pager i{
    font-style: normal;
}

.status{
    display: flex;
    align-items: center;
    height: 13px;
    background: #f0f0f1;
    letter-spacing: -.33px;
}
.hint{
    width: 817px;
    padding-left: 1px;
}
.slot{
    height: 12px;
    padding-left: 3px;
    border-left: 1px solid #c4c4c4;
    line-height: 11px;
    white-space: nowrap;
}
.net{
    display: flex;
    align-items: center;
    gap: 2px;
    padding-left: 3px;
}
.net svg{
    width: 16px;
    height: 10px;
}

.taskbar{
    display: flex;
    flex: 1;
    background: linear-gradient(90deg, #25383d, #22353f 45%, #1b2c40 75%, #1a2440);
}
.app{
    position: relative;
    display: flex;
    align-items: center;
    justify-content: center;
    width: 32.650px;
    height: 27px;
}
.appic{
    width: 16px;
    height: 16px;
}
.app.open::after{
    content: "";
    position: absolute;
    left: 3px;
    right: 3px;
    bottom: 0;
    height: 2px;
    background: #76b9ed;
}
.app.active{
    background: #4a5d63;
}
.app.active::after{
    left: 0;
    right: 0;
}
.letter{
    position: absolute;
    left: 9px;
    top: 8px;
    width: 8px;
    text-align: center;
    font: bold 7px/11px "Open Sans", sans-serif;
    color: #fff;
}
.badge{
    left: 16px;
    top: 12px;
    font-size: 6px;
}
.big{
    left: 8px;
    top: 6px;
    width: 16px;
    font: bold 14px/14px "Open Sans", sans-serif;
}
.dark{
    color: #1d2c2a;
}
.clock{
    display: flex;
    flex-direction: column;
    align-items: center;
    width: 44px;
    margin-left: auto;
    padding-top: 1px;
    line-height: 12px;
    letter-spacing: -.4px;
    color: #fff;
}
</style>
